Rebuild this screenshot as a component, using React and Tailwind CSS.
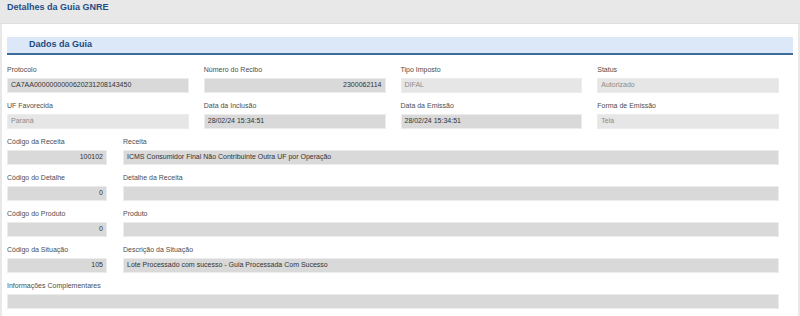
const Field = ({ label, value, muted, right, className = '' }) => (
  <div className={className}>
    <div className="h-[10px] text-[7px] leading-[10px] text-[#4d4d4d]">{label}</div>
    <div
      className={`mt-[3px] flex h-[15px] items-center border border-[#ececec] px-[3px] text-[7px] ${
        muted ? 'bg-[#e6e6e6] text-[#8c8c8c]' : 'bg-[#d9d9d9] text-[#333]'
      } ${right ? 'justify-end' : ''}`}
    >
      {value}
    </div>
  </div>
)

const App = () => {
  return (
    <div className="h-[316px] w-[800px] overflow-hidden bg-[#e8e8e8] font-['Liberation_Sans',Arial,sans-serif]">
      <div className="h-[24px] border-b border-[#dedede] px-[7px] pt-[2px] text-[9px] font-bold leading-[10px] text-[#1f4e86]">
        Detalhes da Guia GNRE
      </div>
      <main className="mx-[2px] h-full bg-white px-[5px] pt-[13px]">
        <div className="flex h-[18px] items-center border-b-2 border-[#3d6c9b] bg-[#dce8f7] pl-[22px] text-[9px] font-bold text-[#1c4a7e]">
          Dados da Guia
        </div>
        <div className="mr-[14px] pt-[10px]">
          <div className="grid grid-cols-4 gap-x-[15px] gap-y-[8px]">
            <Field label="Protocolo" value="CA7AA0000000000620231208143450" />
            <Field label="Número do Recibo" value="2300062114" right />
            <Field label="Tipo Imposto" value="DIFAL" muted />
            <Field label="Status" value="Autorizado" muted />
            <Field label="UF Favorecida" value="Paraná" muted />
            <Field label="Data da Inclusão" value="28/02/24 15:34:51" />
            <Field label="Data da Emissão" value="28/02/24 15:34:51" />
            <Field label="Forma de Emissão" value="Tela" muted />
          </div>
          <div className="mt-[8px] grid grid-cols-[100px_1fr] gap-x-[16px] gap-y-[8px]">
            <Field label="Código da Receita" value="100102" right />
            <Field label="Receita" value="ICMS Consumidor Final Não Contribuinte Outra UF por Operação" />
            <Field label="Código do Detalhe" value="0" right />
            <Field label="Detalhe da Receita" value="" />
            <Field label="Código do Produto" value="0" right />
            <Field label="Produto" value="" />
            <Field label="Código da Situação" value="105" right />
            <Field label="Descrição da Situação" value="Lote Processado com sucesso - Guia Processada Com Sucesso" />
            <Field label="Informações Complementares" value="" className="col-span-2" />
          </div>
        </div>
      </main>
    </div>
  )
}

export default App
